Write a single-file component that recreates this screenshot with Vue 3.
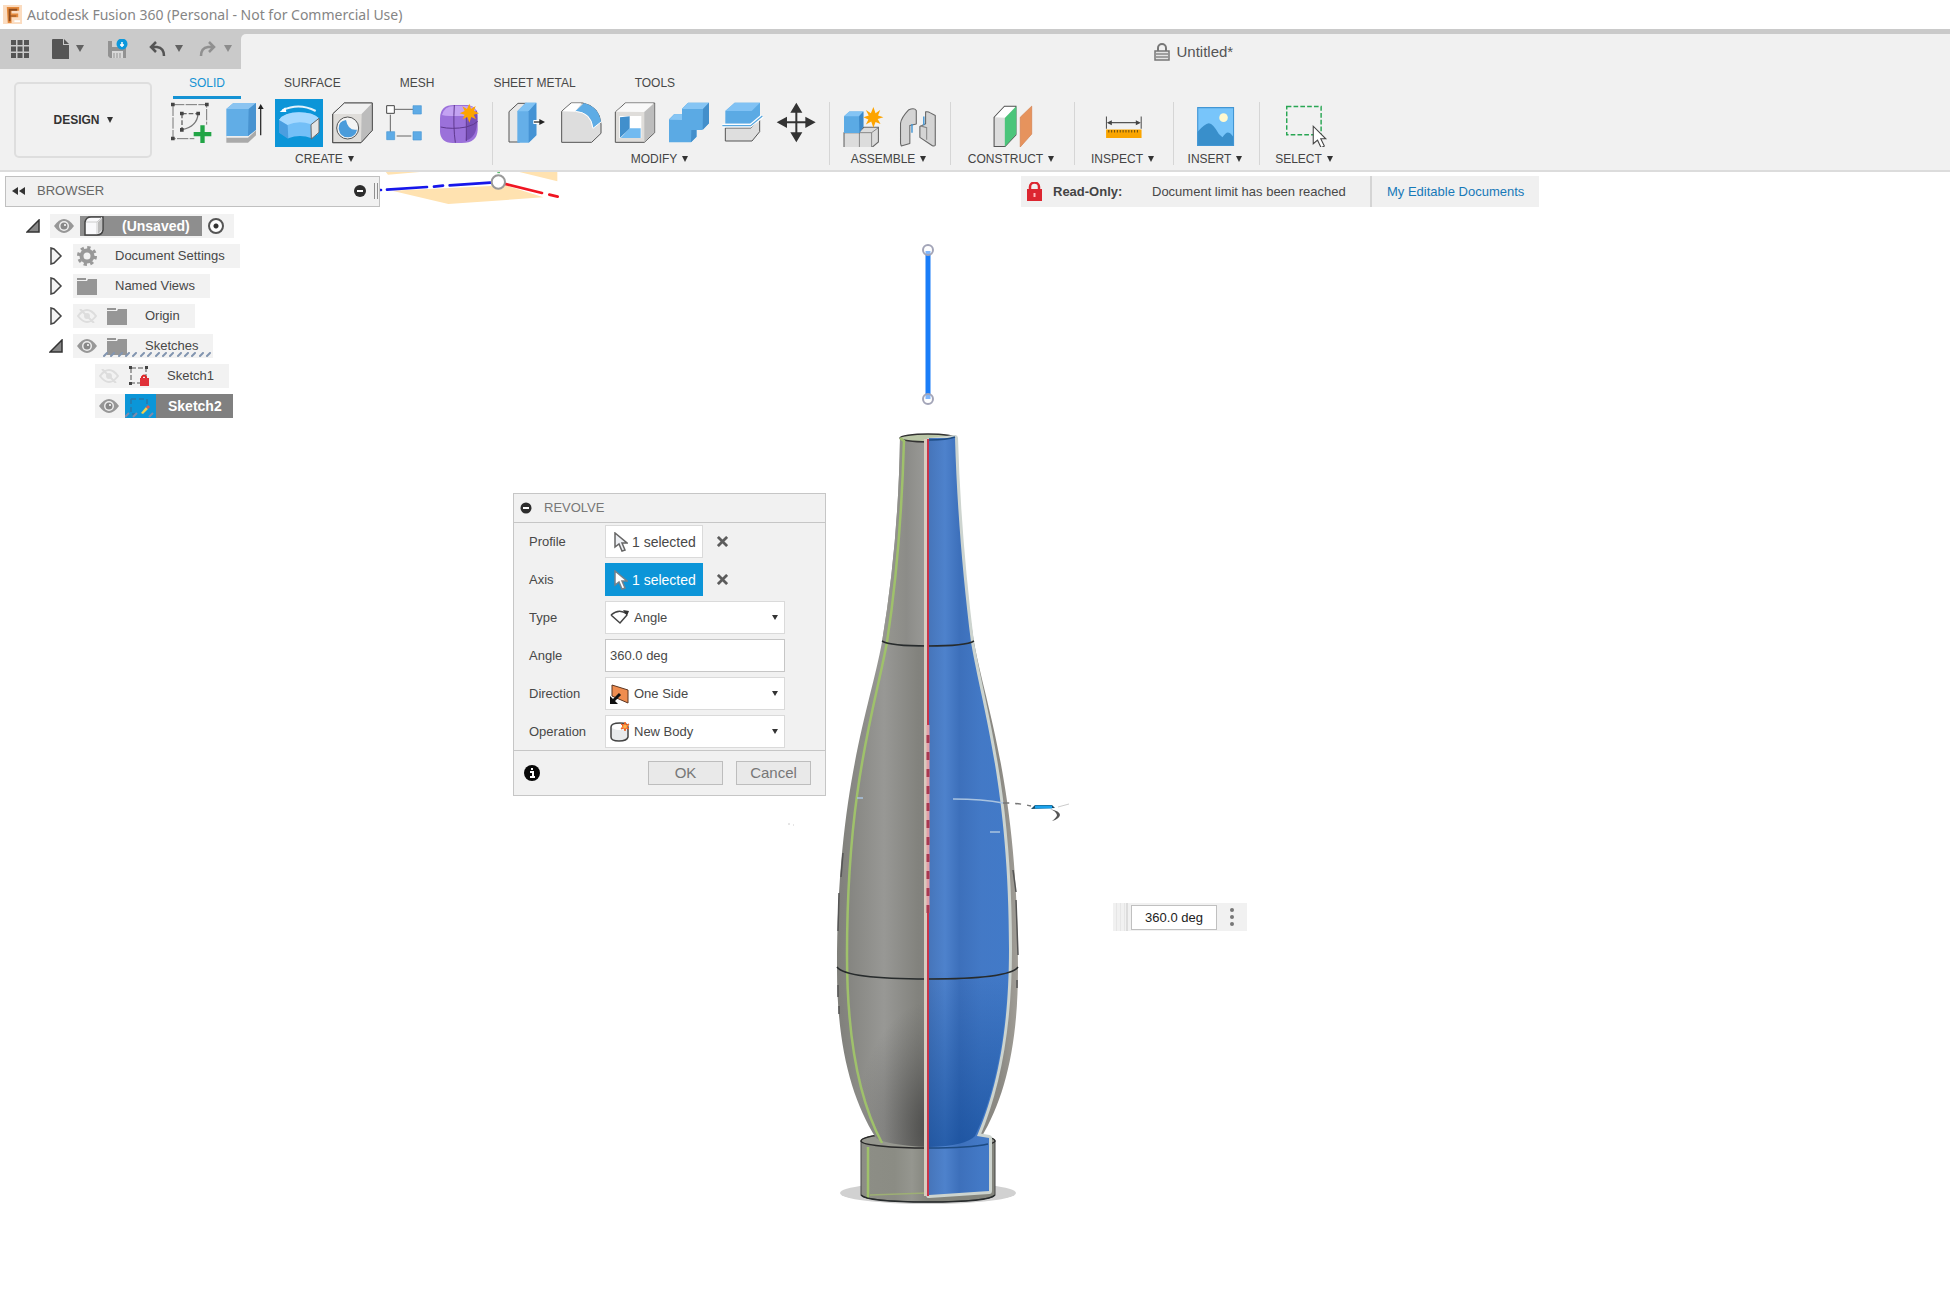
<script setup>
import { ref } from 'vue'

const tabs = ['SOLID', 'SURFACE', 'MESH', 'SHEET METAL', 'TOOLS']
const activeTab = ref('SOLID')
const nodes = [
  { name: '(Unsaved)', level: 0, open: true, eye: 'on', icon: 'body', root: true },
  { name: 'Document Settings', level: 1, open: false, icon: 'gear' },
  { name: 'Named Views', level: 1, open: false, icon: 'folder' },
  { name: 'Origin', level: 1, open: false, eye: 'off', icon: 'folder' },
  { name: 'Sketches', level: 1, open: true, eye: 'on', icon: 'folder', hatched: true },
  { name: 'Sketch1', level: 2, eye: 'off', icon: 'locked' },
  { name: 'Sketch2', level: 2, eye: 'on', icon: 'editing', current: true }
]
const activeComponent = ref('root')
const revolveAngle = ref('360.0 deg')
const type = ref('Angle')
const direction = ref('One Side')
const operation = ref('New Body')
</script>

<template>
  <div class="app">
    <header class="titlebar">
      <svg class="logo" viewBox="0 0 20 20" aria-hidden="true">
        <rect width="20" height="20" fill="#fbdcc0" />
        <path d="M4 2h13v4H9v3h7v4H9v6H5z" fill="#e58a3c" />
        <path d="M6 4h9v2H8v5h6v1H8v5H6z" fill="#8d4a1c" />
        <path d="M12 17h6" stroke="#fff" stroke-width="2" />
      </svg>
      <h1>Autodesk Fusion 360 (Personal - Not for Commercial Use)</h1>
    </header>

    <div class="docbar">
      <div class="quick">
        <button aria-label="Data panel">
          <svg class="q-grid" viewBox="0 0 18 18"><path d="M0 0h5v5H0zM6.500 0h5v5h-5zM13 0h5v5h-5zM0 6.500h5v5H0zM6.500 6.500h5v5h-5zM13 6.500h5v5h-5zM0 13h5v5H0zM6.500 13h5v5h-5zM13 13h5v5h-5z" fill="#555" /></svg>
        </button>
        <button class="q-file" aria-label="File">
          <svg width="17" height="20" viewBox="0 0 17 20"><path d="M0 1q0-1 1-1h10v6h6v14H1q-1 0-1-1z" fill="#555" /><path d="M12 0l5 5h-5z" fill="#555" /></svg>
          <span class="tri"></span>
        </button>
        <button class="q-save" aria-label="Save">
          <svg width="20" height="20" viewBox="0 0 20 20">
            <path d="M0 2h15l3 3v14H2l-2-2z" fill="#929292" /><path d="M4 2h8v6H4z" fill="#cfcfcf" /><path d="M4 12h11v7H4z" fill="#d8d8d8" /><path d="M6 14v5M9 14v5M12 14v5" stroke="#929292" stroke-width="1" />
            <circle cx="14" cy="5" r="5.500" fill="#0b98dc" /><path d="M12 6h4M14 3v5" stroke="#fff" stroke-width="1.500" />
          </svg>
        </button>
        <button class="q-undo" aria-label="Undo">
          <svg width="17" height="16" viewBox="0 0 17 16"><path d="M7 1L2 6l5 5M2 6h6q7 1 7 9" fill="none" stroke="#555" stroke-width="2.500" /></svg>
          <span class="tri"></span>
        </button>
        <button class="q-redo" aria-label="Redo">
          <svg width="17" height="16" viewBox="0 0 17 16"><path d="M10 1l5 5-5 5M15 6H9Q2 7 2 15" fill="none" stroke="#909090" stroke-width="2.500" /></svg>
          <span class="tri faint"></span>
        </button>
      </div>
      <div class="doc-area">
        <div class="doc-tab">
          <svg width="16" height="18" viewBox="0 0 16 18"><path d="M4 8V5a4 4 0 0 1 8 0v3" fill="none" stroke="#777" stroke-width="2" /><rect x="1" y="8" width="14" height="9" fill="#e4e4e4" stroke="#777" stroke-width="1.500" /><path d="M2 11h12M2 14h12" stroke="#888" stroke-width="1.500" /></svg>
          <span>Untitled*</span>
        </div>
      </div>
    </div>

    <div class="ribbon">
      <button class="workspace">DESIGN<span class="tri dark"></span></button>
      <div class="ribbon-main">
        <nav class="tabs">
          <button v-for="t in tabs" :key="t" :class="{ active: t === activeTab }" @click="activeTab = t">{{ t }}</button>
        </nav>
        <div class="groups">
          <section class="group g-create">
            <div class="icons">
              <button aria-label="Create Sketch">
                <svg viewBox="501 297 144 144" fill="none">
                  <path d="M519 314h101v60M519 314v102h64" stroke="#777" stroke-width="3" stroke-dasharray="34 4" />
                  <path d="M546 341h48M546 341v48" stroke="#666" stroke-width="4" stroke-dasharray="14 6" /><path d="M594 341q-2 38-48 48" stroke="#777" stroke-width="4" />
                  <path d="M513 308h11v11h-11zM615 308h11v11h-11zM513 410h11v11h-11zM540 335h11v11h-11zM589 335h11v11h-11zM540 384h11v11h-11z" fill="#444" />
                  <path d="M601 376h13v20h20v13h-20v20h-13v-20h-20v-13h20z" fill="#22a546" />
                </svg>
              </button>
              <button aria-label="Extrude">
                <svg viewBox="663 297 144 144">
                  <path d="M679 408h65l24-22v20l-24 22h-65z" fill="#aaa" /><path d="M679 408h65l24-22v5l-24 22h-65z" fill="#eee" />
                  <path d="M679 327l21-18h68v80l-24 19h-65z" fill="#61ade6" /><path d="M679 327l21-18h68l-22 18z" fill="#8bc4f1" /><path d="M746 327l22-18v80l-24 19z" fill="#4893d0" />
                  <path d="M782 406v-82" stroke="#333" stroke-width="4" /><path d="M774 327l8-15 9 15z" fill="#222" />
                </svg>
              </button>
              <button class="on" aria-label="Revolve">
                <svg viewBox="825 297 144 144">
                  <path d="M847 331q50-24 100 2" fill="none" stroke="#e4f3fc" stroke-width="6" /><path d="M839 336l17-14 3 14z" fill="#fff" />
                  <path d="M837 360q15-23 60-23 43 0 60 18l-2 47-20 13q-35-14-70 0l-28-18z" fill="#73bff7" />
                  <path d="M837 360q15-23 60-23 43 0 60 18l-24 18q-36-14-71 2z" fill="#a4d8ff" /><path d="M837 360l26 16 2 41-28-19z" fill="#4b9ee0" />
                  <path d="M933 374l24-19v42l-23 20z" fill="#e4e4e4" stroke="#666" stroke-width="3" />
                </svg>
              </button>
              <button aria-label="Hole">
                <svg viewBox="987 297 144 144" stroke="#555" stroke-width="3" stroke-linejoin="round">
                  <path d="M998 342l35-33h84v82l-34 37h-85z" fill="#dfddda" /><path d="M998 342l35-33h84l-32 33z" fill="#f1f1f1" stroke="none" /><path d="M1085 342l32-33v82l-34 37z" fill="#bcbcbc" stroke="none" />
                  <path d="M998 342l35-33h84v82l-34 37h-85z" fill="none" /><circle cx="1043" cy="384" r="33" fill="#f4f4f4" /><path d="M1038 360q-23 4-22 26 4 26 29 26 22-2 26-23-27 4-33-29z" fill="#4b9cdb" stroke="none" />
                </svg>
              </button>
              <button aria-label="Rectangular Pattern">
                <svg viewBox="1149 297 144 144">
                  <path d="M1185 328h54M1171 344v52M1190 408h44" stroke="#666" stroke-width="3" /><path d="M1160 317h23v23h-23z" fill="#fff" stroke="#444" stroke-width="3" /><path d="M1239 317h25v25h-25zM1160 395h24v24h-24zM1239 395h25v25h-25z" fill="#5eabe6" stroke="#4a98d6" stroke-width="2" />
                </svg>
              </button>
              <button aria-label="Create Form">
                <svg viewBox="1311 297 144 144">
                  <path d="M1320 355q0-40 42-40h40q32 3 31 40v35q-2 40-50 39h-25q-37-2-38-34z" fill="#9b71da" /><path d="M1326 345q6-27 38-27h34q24 0 30 12-12 17-37 18h-40q-17 0-25-3z" fill="#c3a2f2" /><path d="M1403 350q20-5 28-20 4 60-12 78-12 13-22 13z" fill="#7850b7" /><path d="M1363 315q-4 64 3 113M1322 381q34 8 77 0 26-7 34-17M1399 350v73" fill="none" stroke="#5f398f" stroke-width="3" />
                  <path d="M1408 311l5 16 14-9-5 14 15 8-16 4 7 14-14-7-6 17-6-17-14 7 6-14-15-4 15-7-7-14 14 8z" fill="#fda400" />
                </svg>
              </button>
            </div>
            <button class="group-label">CREATE<span class="tri dark"></span></button>
          </section>

          <section class="group g-modify">
            <div class="icons">
              <button aria-label="Press Pull">
                <svg viewBox="66 117 144 144"><path d="M87 155l27-25h25v95l-20 21H87z" fill="#e8e8e8" stroke="#555" stroke-width="3" /><path d="M112 154l25-26h32v98l-23 22h-34z" fill="#65afe8" /><path d="M112 154l25-26h32l-23 26z" fill="#80c2f3" /><path d="M146 154l23-26v98l-23 22z" fill="#4593d4" /><path d="M160 186h22" stroke="#fff" stroke-width="12" /><path d="M162 186h20" stroke="#333" stroke-width="4" /><path d="M178 177l17 9-17 9z" fill="#222" /></svg>
              </button>
              <button aria-label="Fillet">
                <svg viewBox="228 117 144 144"><path d="M245 154l28-25h35q51 10 55 63v28l-28 27h-90z" fill="#ddd" stroke="#555" stroke-width="3" /><path d="M247 154l27-24h31l-20 25z" fill="#fff" /><path d="M286 154l26-25q45 12 51 57l-24 19q-3-48-53-51z" fill="#5eace5" /><path d="M286 154q47 3 53 51l24-19" fill="none" stroke="#fff" stroke-width="3" /></svg>
              </button>
              <button aria-label="Shell">
                <svg viewBox="390 117 144 144"><path d="M406 156l30-27h88v89l-31 29h-87z" fill="#dfddda" stroke="#555" stroke-width="3" /><path d="M408 155l29-25h84l-28 26z" fill="#f9f9f9" /><path d="M493 156l30-26v87l-30 29z" fill="#bdbdbd" /><path d="M418 168h66v66h-66z" fill="#fff" /><path d="M420 172l29-3v37l-29 27z" fill="#418fcc" /><path d="M422 234l27-29h33v29z" fill="#71baf0" /></svg>
              </button>
              <button aria-label="Combine">
                <svg viewBox="552 117 144 144"><path d="M567 178l15-15h24v-17l18-18h63v62l-21 20h-16v20l-17 17h-66z" fill="#5baae4" /><path d="M606 147l18-19h63l-18 19zM567 179l16-16h23v17z" fill="#86c5f4" /><path d="M669 147l18-19v62l-19 20zM634 210h15v20l-16 17z" fill="#438fcb" /></svg>
              </button>
              <button aria-label="Split Body">
                <svg viewBox="714 117 144 144"><path d="M736 153l28-25h76v43l-24 20h-80z" fill="#5baae4" /><path d="M736 153l28-25h76l-25 25z" fill="#81c2f4" /><path d="M736 204h77l26-26v37l-23 28h-80z" fill="#dedede" stroke="#555" stroke-width="3" /><path d="M727 197h85l35-29" fill="none" stroke="#fff" stroke-width="11" /><path d="M727 197h85l35-29" fill="none" stroke="#5aa8df" stroke-width="4" /></svg>
              </button>
              <button aria-label="Move">
                <svg viewBox="876 117 144 144"><path d="M949 146v84M910 187h80" stroke="#333" stroke-width="6" /><path d="M949 128l18 30h-36zM949 247l18-30h-36zM890 187l31-17v34zM1007 187l-31-17v34z" fill="#333" /></svg>
              </button>
            </div>
            <button class="group-label">MODIFY<span class="tri dark"></span></button>
          </section>

          <section class="group g-assemble">
            <div class="icons">
              <button aria-label="New Component">
                <svg viewBox="53 109 134 134"><path d="M67 203h43v-3l12-12h41v41l-19 16H67z" fill="#dcdcdc" stroke="#666" stroke-width="3" /><path d="M110 203v42M110 203h34l19-14M144 203v41" stroke="#666" stroke-width="2" fill="none" /><path d="M67 157l15-13h39v42l-11 18H67z" fill="#5baae4" /><path d="M67 157l15-13h39l-12 13z" fill="#84c4f4" /><path d="M109 157l12-13v42l-11 18z" fill="#3b88c8" /><path d="M149 131l6 18 13-9-6 15 15 5-16 5 8 14-14-6-6 16-6-17-15 8 7-14-14-6 15-5-8-15 14 9z" fill="#fda400" /></svg>
              </button>
              <button aria-label="Joint">
                <svg viewBox="204 109 134 134"><path d="M225 177q2-16 22-37 16-8 22 1v38l-18 4v50l-24 7-2-7zM322 155v83q-3 4-9 1l-34-23v-30l16-8v-33q8-1 12 2z" fill="#d4d4d4" stroke="#666" stroke-width="3" stroke-linejoin="round" /><path d="M281 184l17 5v34" stroke="#888" stroke-width="3" fill="none" /><path d="M257 179v24M290 158v24" stroke="#4296d5" stroke-width="4" /></svg>
              </button>
            </div>
            <button class="group-label">ASSEMBLE<span class="tri dark"></span></button>
          </section>

          <section class="group g-construct">
            <div class="icons">
              <button aria-label="Offset Plane">
                <svg viewBox="470 109 134 134"><path d="M487 160l29-31h32v80l-31 33h-30z" fill="#ddd" stroke="#555" stroke-width="3" /><path d="M489 160l27-29h30l-28 30z" fill="#fff" /><path d="M517 162l32-33v78l-32 35z" fill="#4bc57a" /><path d="M560 160l32-31v78l-32 36z" fill="#e6935d" stroke="#d5804b" stroke-width="2" /></svg>
              </button>
            </div>
            <button class="group-label">CONSTRUCT<span class="tri dark"></span></button>
          </section>

          <section class="group g-inspect">
            <div class="icons">
              <button aria-label="Measure">
                <svg viewBox="784 109 134 134"><path d="M802 158v34M899 158v34M808 175h84" stroke="#555" stroke-width="3" /><path d="M803 175l14-7v14zM898 175l-14-7v14z" fill="#444" /><path d="M801 194h99v24h-99z" fill="#faa500" /><path d="M807 199h88" stroke="#71500d" stroke-width="7" stroke-dasharray="3 5" /></svg>
              </button>
            </div>
            <button class="group-label">INSPECT<span class="tri dark"></span></button>
          </section>

          <section class="group g-insert">
            <div class="icons">
              <button aria-label="Insert Image">
                <svg viewBox="1042 109 134 134"><path d="M1057 132h102v108h-102z" fill="#78c5fa" /><circle cx="1130" cy="161" r="12" fill="#fff9cf" /><path d="M1057 201q20-22 32-24 12 1 28 30l10 9q11-17 18-13 7 2 14 15v22h-102z" fill="#398fcb" /><path d="M1058 133h100v106h-100z" fill="none" stroke="#4296d4" stroke-width="3" /></svg>
              </button>
            </div>
            <button class="group-label">INSERT<span class="tri dark"></span></button>
          </section>

          <section class="group g-select">
            <div class="icons">
              <button aria-label="Select">
                <svg viewBox="1291 109 134 134"><path d="M1307 130h96v79h-96z" fill="none" stroke="#28a653" stroke-width="4" stroke-dasharray="13 6" /><path d="M1381 185v49l12-10 10 21 9-5-10-20h14z" fill="#fff" stroke="#444" stroke-width="3" /></svg>
              </button>
            </div>
            <button class="group-label">SELECT<span class="tri dark"></span></button>
          </section>
        </div>
      </div>
    </div>

    <main class="canvas">
      <svg class="origin" viewBox="60 36 540 102" aria-hidden="true">
        <path d="M96 92l169 40 285-20-112-36zM75 33h140L84 44zM470 34h122v30z" fill="#ffe2b0" />
        <path d="M60 90h3M81 89l120-8M222 80l27-3M269 76l122-8" stroke="#1717ea" stroke-width="8" stroke-linecap="round" />
        <path d="M432 71l114 28M568 104l25 6" stroke="#f01522" stroke-width="8" stroke-linecap="round" />
        <circle cx="415" cy="66" r="20" fill="#fff" stroke="#999" stroke-width="6" /><path d="M412 37h8" stroke="#58bd6c" stroke-width="5" />
      </svg>

      <svg class="model" viewBox="780 230 300 1000" role="img" aria-label="Revolved bottle body">
        <defs>
          <linearGradient id="steel" gradientUnits="userSpaceOnUse" x1="837" x2="1018" y1="0" y2="0">
            <stop offset="0" stop-color="#7f7f7a" /><stop offset=".26" stop-color="#989895" /><stop offset=".45" stop-color="#82827d" /><stop offset=".9" stop-color="#8b8983" /><stop offset="1" stop-color="#a19e97" />
          </linearGradient>
          <linearGradient id="neck" gradientUnits="userSpaceOnUse" x1="885" x2="928" y1="0" y2="0">
            <stop offset="0" stop-color="#969690" /><stop offset=".5" stop-color="#8c8c88" /><stop offset="1" stop-color="#9b9b98" />
          </linearGradient>
          <linearGradient id="foot" gradientUnits="userSpaceOnUse" x1="861" x2="995" y1="0" y2="0">
            <stop offset="0" stop-color="#8d8e86" /><stop offset=".25" stop-color="#8b8c84" /><stop offset=".38" stop-color="#95968f" /><stop offset=".5" stop-color="#84857d" /><stop offset="1" stop-color="#84857d" />
          </linearGradient>
          <linearGradient id="blue" gradientUnits="userSpaceOnUse" x1="929" x2="1009" y1="0" y2="0">
            <stop offset="0" stop-color="#4675ba" /><stop offset=".2" stop-color="#4e82cc" /><stop offset=".38" stop-color="#3d70bb" /><stop offset=".65" stop-color="#4379c6" /><stop offset="1" stop-color="#427ac8" />
          </linearGradient>
          <linearGradient id="shade" x1="0" x2="0" y1="0" y2="1">
            <stop offset="0" stop-color="#003a88" stop-opacity="0" /><stop offset="1" stop-color="#003a88" stop-opacity=".5" />
          </linearGradient>
          <radialGradient id="dusk" gradientUnits="userSpaceOnUse" cx="934" cy="1130" r="130" gradientTransform="translate(374 0) scale(.6 1)">
            <stop offset="0" stop-color="#333" stop-opacity=".75" /><stop offset="1" stop-color="#555" stop-opacity="0" />
          </radialGradient>
        </defs>

        <path d="M928 251v148" stroke="#1a7df8" stroke-width="5" />
        <g fill="#fff" fill-opacity=".45" stroke="#a3a5b8" stroke-width="2"><circle cx="928" cy="250" r="5" /><circle cx="928" cy="399" r="5" /></g>

        <ellipse cx="928" cy="1193" rx="88" ry="11" fill="#d1d1d1" />
        <path d="M861 1141a67 9 0 0 1 134 0v54a67 7 0 0 1-134 0z" fill="url(#foot)" stroke="#444" stroke-width="1" />
        <path d="M861 1141a67 7 0 0 0 134 0a67 9 0 0 0-134 0z" fill="#96978f" stroke="#292929" stroke-width="1.500" />

        <path d="M900 438C899 508 893 576 882 642C870 708 837 786 837 969C837 1045 851 1098 876 1138Q886 1145 928 1147Q972 1145 981 1138C1005 1098 1018 1045 1018 969C1018 786 986 708 974 642C963 576 957 508 956 438z" fill="url(#steel)" />
        <path d="M900 438C899 508 893 576 882 642q10 5 46 5V438z" fill="url(#neck)" />
        <path d="M837 969q14 10 91 11v167q-42-2-52-9C851 1098 837 1045 837 969z" fill="url(#dusk)" />
        <ellipse cx="928" cy="438" rx="28" ry="4" fill="#bac6a6" stroke="#333" stroke-width="1.500" />

        <path d="M929 441L955 438C957 508 963 578 971 642C982 708 1009 786 1009 949C1009 1040 994 1096 977 1136L989 1138V1191L929 1195z" fill="none" stroke="#cdd4cf" stroke-width="6" stroke-linejoin="round" />
        <path d="M929 438H955C957 508 963 578 971 642C982 708 1009 786 1009 949C1009 1040 994 1096 977 1136L989 1138V1191L929 1195z" fill="url(#blue)" />
        <path d="M929 970H1008C1006 1045 992 1100 975 1136Q966 1146 929 1147z" fill="url(#shade)" />
        <path d="M929 440q18 0 26-3M928 1148a67 7 0 0 0 60-4" fill="none" stroke="#1d4b82" stroke-width="1.500" />

        <path d="M904 440C902 508 897 578 887 642C875 708 847 786 847 955C847 1040 860 1102 882 1143M868 1147v51M900 438l4 3" fill="none" stroke="#9fc16b" stroke-width="2.500" />
        <path d="M870 1195l58-2" stroke="#9daf74" stroke-width="1.500" />
        <path d="M882 641q8 5 46 5t46-5M837 967q9 12 91 12t90-12M861 1195q6 7 67 7t67-7" fill="none" stroke="#272b2c" stroke-width="1.500" />
        <path d="M843 853l-2 24M839 893l-1 38M838 985v12M839 1006v8M1013 870l3 22M1016 900l2 55M1017 980v8" stroke="#555" stroke-width="1.500" />

        <path d="M926 439v757" stroke="#d9cbbf" stroke-width="4" /><path d="M928 439v757" stroke="#c8344a" stroke-width="2" />
        <path d="M928 725v188" stroke="#e3a0a8" stroke-width="3" /><path d="M928 735v178" stroke="#a93850" stroke-width="3" stroke-dasharray="8 9" />

        <path d="M953 799q30 0 50 4M990 832h10M857 798h6" fill="none" stroke="#a9c3e0" stroke-width="1.500" /><path d="M1003 803q16 0 28 3" fill="none" stroke="#777" stroke-width="1.500" stroke-dasharray="6 6" />
        <path d="M1031 809l4-4h17l3 3z" fill="#174e6b" /><path d="M1035 807h17" stroke="#1ba2ed" stroke-width="3" /><path d="M1050 809q10 2 10 6-1 4-8 6 5-4 5-6-1-4-7-6z" fill="#555" /><path d="M1058 807l11-3M788 824h2M793 825h1" stroke="#ccc" stroke-width="1" />
      </svg>

      <aside class="browser">
        <div class="browser-head">
          <svg width="13" height="8" viewBox="0 0 13 8"><path d="M6 0v8L0 4zM13 0v8L7 4z" fill="#333" /></svg>
          <h2>BROWSER</h2>
          <svg width="12" height="12" viewBox="0 0 12 12"><circle cx="6" cy="6" r="6" fill="#2d2d2d" /><path d="M3 6h6" stroke="#fff" stroke-width="2" /></svg>
          <span class="grip"></span>
        </div>
        <ul class="tree">
          <li v-for="n in nodes" :key="n.name" :class="['level-' + n.level, { hatched: n.hatched, current: n.current, root: n.root }]">
            <button v-if="n.open !== undefined" class="toggle" :aria-label="'Expand ' + n.name">
              <svg v-if="n.open" width="14" height="14" viewBox="0 0 14 14"><path d="M13 1v12H1z" fill="#888" stroke="#333" stroke-width="1.500" /></svg>
              <svg v-else width="14" height="18" viewBox="0 0 14 18"><path d="M2 1l3 1 7 7-7 7-3 1z" fill="#f4f4f4" stroke="#444" stroke-width="1.500" /></svg>
            </button>
            <div class="chip">
              <svg v-if="n.eye === 'on'" class="eye" width="20" height="14" viewBox="0 0 20 14"><path d="M0 7q10-14 20 0-10 14-20 0z" fill="#979797" /><circle cx="10" cy="7" r="5" fill="#eee" /><circle cx="10" cy="7" r="3.500" fill="#888" /><circle cx="11" cy="6" r="1" fill="#fff" /></svg>
              <svg v-else-if="n.eye === 'off'" class="eye" width="20" height="14" viewBox="0 0 20 14"><path d="M1 7q9-12 18 0-9 12-18 0zM3 0l14 14" fill="none" stroke="#ddd" stroke-width="2" /><circle cx="10" cy="7" r="3" fill="#ddd" /></svg>
              <span class="node">
                <svg v-if="n.icon === 'body'" class="kind" width="20" height="20" viewBox="0 0 20 20"><path d="M1 6q1-5 6-5h12v13q-1 5-6 5H1z" fill="#f9f9fb" stroke="#444" stroke-width="1.500" /><path d="M2 6h11v12M13 6l5-5" fill="none" stroke="#ccc" /><path d="M14 6l4-4v12l-4 4z" fill="#bbb" /></svg>
                <svg v-else-if="n.icon === 'gear'" class="kind" width="20" height="20" viewBox="0 0 20 20" fill="none" stroke="#999"><circle cx="10" cy="10" r="5.500" stroke-width="4" /><circle cx="10" cy="10" r="8.500" stroke-width="3" stroke-dasharray="3.300 3.370" /></svg>
                <svg v-else-if="n.icon === 'folder'" class="kind" width="20" height="17" viewBox="0 0 20 17"><path d="M0 0h9v2H0zM0 3h10l1-2h9v16H0z" fill="#969696" /></svg>
                <svg v-else-if="n.icon === 'locked'" class="kind" width="20" height="20" viewBox="0 0 20 20"><path d="M2 2h15v9M2 2v15h9" fill="none" stroke="#888" stroke-width="1.500" stroke-dasharray="5 2" /><path d="M0 0h3v3H0zM16 0h3v3h-3zM0 16h3v3H0z" fill="#444" /><path d="M13 12v-1q2-3 4 0v1" fill="none" stroke="#d22" stroke-width="2" /><path d="M11 12h9v8h-9z" fill="#e0323a" /></svg>
                <svg v-else class="sketching" width="31" height="24" viewBox="0 0 31 24"><path d="M0 0h31v24H0z" fill="#0b96d8" /><path d="M6 5h16v9M6 5v15h9" fill="none" stroke="#2b78a8" stroke-width="1.500" stroke-dasharray="5 3" /><path d="M16 19l5-6 2 2-5 5z" fill="#f4d04b" /><path d="M21 13l2-2 2 2-2 2z" fill="#dc5d55" /><path d="M0 23l4-4M8 23l4-4M24 23l4-4" stroke="#7f8bab" stroke-width="2" /></svg>
                <span class="name">{{ n.name }}</span>
              </span>
              <input v-if="n.root" v-model="activeComponent" type="radio" name="component" value="root" aria-label="Activate component">
              <svg v-if="n.hatched" class="hatch" width="111" height="5" viewBox="0 0 111 5"><path d="M1 4l3-3m4 3l3-3m5 3l3-3m4 3l3-3m4 3l3-3m5 3l3-3m4 3l3-3m5 3l3-3m4 3l3-3m4 3l3-3m5 3l3-3m4 3l3-3m4 3l3-3m5 3l3-3m4 3l3-3" fill="none" stroke="#8295b0" stroke-width="2" stroke-linecap="round" /></svg>
            </div>
          </li>
        </ul>
      </aside>

      <div class="notice" role="status">
        <svg width="15" height="19" viewBox="0 0 15 19"><path d="M3 8V5a4 4 0 0 1 9 0v3" fill="none" stroke="#dc2630" stroke-width="2.500" /><path d="M0 7h15v12H0z" fill="#dc2630" /><path d="M7.500 11v4" stroke="#ffb9bd" stroke-width="2" /></svg>
        <strong>Read-Only:</strong>
        <span class="notice-text">Document limit has been reached</span>
        <a href="#">My Editable Documents</a>
      </div>

      <form class="dialog" @submit.prevent>
        <header>
          <svg width="12" height="12" viewBox="0 0 12 12"><circle cx="6" cy="6" r="5.500" fill="#2d2d2d" /><path d="M3 6h6" stroke="#fff" stroke-width="2" /></svg>
          <h2>REVOLVE</h2>
        </header>
        <div class="fields">
          <div class="field">
            <span class="label">Profile</span>
            <button type="button" class="pick"><svg width="14" height="20" viewBox="0 0 14 20"><path d="M1 1v14l4-3 3 7 3-1-3-7h5z" fill="#eef0f4" stroke="#666" stroke-width="1.500" /></svg>1 selected</button>
            <button type="button" class="clear" aria-label="Clear profile"><svg viewBox="0 0 12 12"><path d="M1 1l10 10M11 1L1 11" stroke="#5c5c5c" stroke-width="3" /></svg></button>
          </div>
          <div class="field">
            <span class="label">Axis</span>
            <button type="button" class="pick on"><svg width="14" height="20" viewBox="0 0 14 20"><path d="M1 1v14l4-3 3 7 3-1-3-7h5z" fill="#fff" stroke="#75818a" stroke-width="1.500" /></svg>1 selected</button>
            <button type="button" class="clear" aria-label="Clear axis"><svg viewBox="0 0 12 12"><path d="M1 1l10 10M11 1L1 11" stroke="#5c5c5c" stroke-width="3" /></svg></button>
          </div>
          <div class="field">
            <label class="label" for="type">Type</label>
            <div class="drop">
              <svg width="20" height="20" viewBox="0 0 20 20"><path d="M1 7q8-7 16-1M1 7l9 8 7-8" fill="none" stroke="#444" stroke-width="1.500" /><path d="M13 2l6 1-2 5z" fill="#333" /></svg>
              <select id="type" v-model="type"><option>Angle</option><option>To</option><option>All</option></select>
              <span class="tri small"></span>
            </div>
          </div>
          <div class="field">
            <label class="label" for="angle">Angle</label>
            <input id="angle" v-model="revolveAngle" class="text" type="text">
          </div>
          <div class="field">
            <label class="label" for="direction">Direction</label>
            <div class="drop">
              <svg width="20" height="20" viewBox="0 0 20 20"><path d="M2 1l16 5v13L2 12z" fill="#ef8d50" stroke="#5b3521" /><path d="M2 18l8-8" stroke="#111" stroke-width="3" /><path d="M0 12l8 8H0z" fill="#111" /></svg>
              <select id="direction" v-model="direction"><option>One Side</option><option>Two Sides</option><option>Symmetric</option></select>
              <span class="tri small"></span>
            </div>
          </div>
          <div class="field">
            <label class="label" for="operation">Operation</label>
            <div class="drop">
              <svg width="20" height="20" viewBox="0 0 20 20"><path d="M1 5q0-4 9-4 8 0 8 4v10q-1 4-9 4-8 0-8-4z" fill="#e8eaec" stroke="#444" stroke-width="1.500" /><ellipse cx="9" cy="5" rx="7" ry="3" fill="#fff" /><path d="M15 0l1 3 3-1-2 3 2 2-3-1-1 3-1-3-3 1 2-3-2-2 3 1z" fill="#ffb24a" stroke="#ec6226" /></svg>
              <select id="operation" v-model="operation"><option>New Body</option><option>Join</option><option>Cut</option></select>
              <span class="tri small"></span>
            </div>
          </div>
        </div>
        <footer>
          <svg width="16" height="16" viewBox="0 0 16 16"><circle cx="8" cy="8" r="8" fill="#080808" /><path d="M6 7h3v5M6 12h5" fill="none" stroke="#fff" stroke-width="2" /><path d="M7 3h2v2H7z" fill="#fff" /></svg>
          <button type="submit">OK</button>
          <button type="button">Cancel</button>
        </footer>
      </form>

      <div class="hud">
        <span class="hud-grip"></span>
        <input v-model="revolveAngle" type="text" aria-label="Revolve angle">
        <button aria-label="More options"><i></i><i></i><i></i></button>
      </div>
    </main>
  </div>
</template>

<style>
body { margin: 0; background: #fff; }
</style>

<style scoped>
.app, .app * { box-sizing: border-box; }
.app {
  display: flex; flex-direction: column; min-height: 100vh; overflow-x: hidden;
  font: 13px/20px "Liberation Sans", Arial, sans-serif; color: #484848;
}
button, input, select { margin: 0; padding: 0; border: 0; background: none; font: inherit; color: inherit; }
svg { display: block; flex: none; }
h1, h2 { margin: 0; font-weight: 400; }
.tri { display: inline-block; border: 4px solid transparent; border-top: 7px solid #626262; border-bottom: 0; }
.tri.dark { border-width: 6px 3px 0; border-top-color: #333; }
.tri.faint { border-top-color: #8c8c8c; }
.tri.small { border-width: 5px 3px 0; border-top-color: #333; }

.titlebar { display: flex; align-items: center; gap: 5px; height: 29px; padding-left: 3px; }
.logo { width: 19px; height: 19px; }
h1 { font: 14px/28px "Noto Sans", "Open Sans", sans-serif; color: #858585; }

.docbar { display: flex; height: 40px; padding-top: 5px; background: #cacaca; }
.quick { display: flex; align-items: center; width: 241px; height: 29px; padding-left: 11px; }
.quick button { display: flex; align-items: center; }
.q-grid { width: 18px; height: 18px; }
.q-file { margin-left: 23px; gap: 7px; }
.q-save { margin-left: 24px; }
.q-undo { margin-left: 21px; gap: 9px; }
.q-redo { margin-left: 16px; gap: 8px; }
.doc-area { flex: 1; border-top-left-radius: 5px; background: #f1f1f1; }
.doc-tab { display: flex; align-items: center; gap: 7px; height: 35px; padding-left: calc(50% + 58px); font-size: 15px; color: #555; }

.ribbon { display: flex; background: #f1f1f1; border-bottom: 2px solid #dcdcdc; }
.workspace {
  display: flex; align-items: center; justify-content: center; gap: 7px; width: 138px; height: 76px; margin: 13px 7px 0 14px;
  border: 2px solid #dedede; border-radius: 5px; font-weight: 700; font-size: 12px; color: #333;
}
.ribbon-main { flex: 1; }
.tabs { display: flex; gap: 27px; height: 30px; padding-left: 14px; }
.tabs button { padding: 1px 16px 0; font-size: 12px; line-height: 26px; border-bottom: 3px solid transparent; white-space: nowrap; }
.tabs .active { color: #1593d4; border-bottom-color: #1593d4; }
.groups { display: flex; height: 71px; }
.group { position: relative; display: flex; flex-direction: column; align-items: center; }
.group + .group::before { content: ""; position: absolute; left: 0; top: 3px; width: 1px; height: 63px; background: #d6d6d6; }
.g-create { width: 333px; }
.g-modify { width: 337px; }
.g-assemble { width: 121px; }
.g-construct { width: 124px; }
.g-inspect { width: 99px; }
.g-insert { width: 86px; }
.g-select { width: 92px; }
.icons { display: flex; gap: 6px; }
.icons button, .icons svg { width: 48px; height: 48px; }
.icons .on { background: #0c95d8; }
.group-label { display: flex; align-items: center; gap: 5px; height: 20px; margin-top: 2px; padding-right: 2px; font-size: 12px; color: #444; }

.canvas { position: relative; flex: 1; min-height: 1060px; background: #fff; }
.origin { position: absolute; left: 380px; top: 0; width: 180px; height: 34px; }
.model { position: absolute; left: 780px; top: 58px; width: 300px; height: 1000px; }

.browser { position: absolute; left: 5px; top: 4px; width: 375px; }
.browser-head { display: flex; align-items: center; height: 31px; padding: 0 1px 1px 6px; border: 1px solid #c0c0c0; background: #f1f1f1; }
.browser-head h2 { flex: 1; margin-left: 12px; font-size: 13px; color: #666; }
.grip { width: 4px; height: 16px; margin-left: 8px; border: 1px solid #8f8f8f; border-width: 0 1px; }
.tree { display: flex; flex-direction: column; gap: 6px; margin: 7px 0 0; padding: 0; list-style: none; }
.tree li { display: flex; align-items: center; height: 24px; }
.level-0 { padding-left: 21px; }
.level-1 { padding-left: 44px; }
.level-2 { padding-left: 90px; }
.toggle { width: 24px; }
.chip { position: relative; display: flex; align-items: center; height: 24px; padding-right: 15px; background: #f2f2f2; }
.eye { margin: 0 6px 0 4px; }
.node { display: flex; align-items: center; height: 24px; }
.kind { margin-left: 4px; margin-right: 18px; }
.root .chip { padding-right: 10px; }
.root .node { height: 20px; padding-right: 12px; background: #8e8e8e; color: #fff; font-weight: 700; font-size: 14px; }
.root .kind { margin-left: 4px; }
.chip input { appearance: none; width: 16px; height: 16px; margin-left: 6px; border: 2px solid #555; border-radius: 50%; background: radial-gradient(circle, #333 2px, #fff 3px); }
.current .chip { padding-right: 0; }
.current .node { padding-right: 11px; background: #808080; color: #fff; font-weight: 700; font-size: 14px; }
.sketching { margin-right: 12px; }
.hatch { position: absolute; left: 30px; bottom: 1px; }

.notice { position: absolute; left: calc(50% + 46px); top: 4px; display: flex; align-items: center; height: 31px; padding-left: 6px; background: #f0f0f0; white-space: nowrap; }
.notice strong { width: 99px; margin-left: 11px; color: #444; }
.notice-text { width: 218px; }
.notice a { padding: 0 15px; border-left: 2px solid #d4d4d4; line-height: 31px; color: #1779b8; text-decoration: none; }

.dialog { position: absolute; left: 513px; top: 321px; width: 313px; border: 1px solid #c6c6c6; background: #f1f1f1; }
.dialog header { display: flex; align-items: center; gap: 12px; height: 29px; padding-left: 6px; border-bottom: 1px solid #c6c6c6; }
.dialog h2 { font-size: 13px; color: #777; }
.fields { display: flex; flex-direction: column; gap: 5px; padding: 2px 15px; }
.field { display: flex; align-items: center; height: 33px; }
.label { width: 76px; }
.pick { display: flex; align-items: center; gap: 4px; width: 98px; height: 33px; padding-left: 8px; border: 1px solid #dadada; background: #fff; font-size: 14px; white-space: nowrap; }
.pick.on { border-color: #0c95d8; background: #0c95d8; color: #fff; }
.clear { margin-left: 14px; }
.clear svg { width: 11px; height: 11px; }
.drop, .text { width: 180px; height: 33px; border: 1px solid #dadada; background: #fff; }
.drop { display: flex; align-items: center; padding: 0 6px 0 4px; }
.drop select { flex: 1; margin-left: 4px; height: 31px; appearance: none; outline: 0; }
.text { padding-left: 4px; border-color: #c6c6c6; }
.dialog footer { display: flex; align-items: center; gap: 13px; height: 45px; padding: 0 14px 0 10px; border-top: 1px solid #c6c6c6; }
.dialog footer svg { margin-right: auto; }
.dialog footer button { width: 75px; height: 24px; border: 1px solid #bdbdbd; background: #e9e9e9; font-size: 15px; line-height: 22px; color: #777; }

.hud { position: absolute; left: 1113px; top: 731px; display: flex; align-items: center; width: 134px; height: 28px; background: #f1f1f1; }
.hud-grip { width: 15px; height: 28px; margin-right: 3px; border-right: 2px solid #dcdcdc; background: repeating-linear-gradient(90deg, transparent 0 3px, #e6e6e6 3px 4px); }
.hud input { width: 86px; height: 25px; border: 1px solid #c0c0c0; background: #fff; text-align: center; color: #222; }
.hud button { display: flex; flex-direction: column; align-items: center; gap: 3px; width: 30px; }
.hud i { width: 4px; height: 4px; border-radius: 50%; background: #777; }
</style>
